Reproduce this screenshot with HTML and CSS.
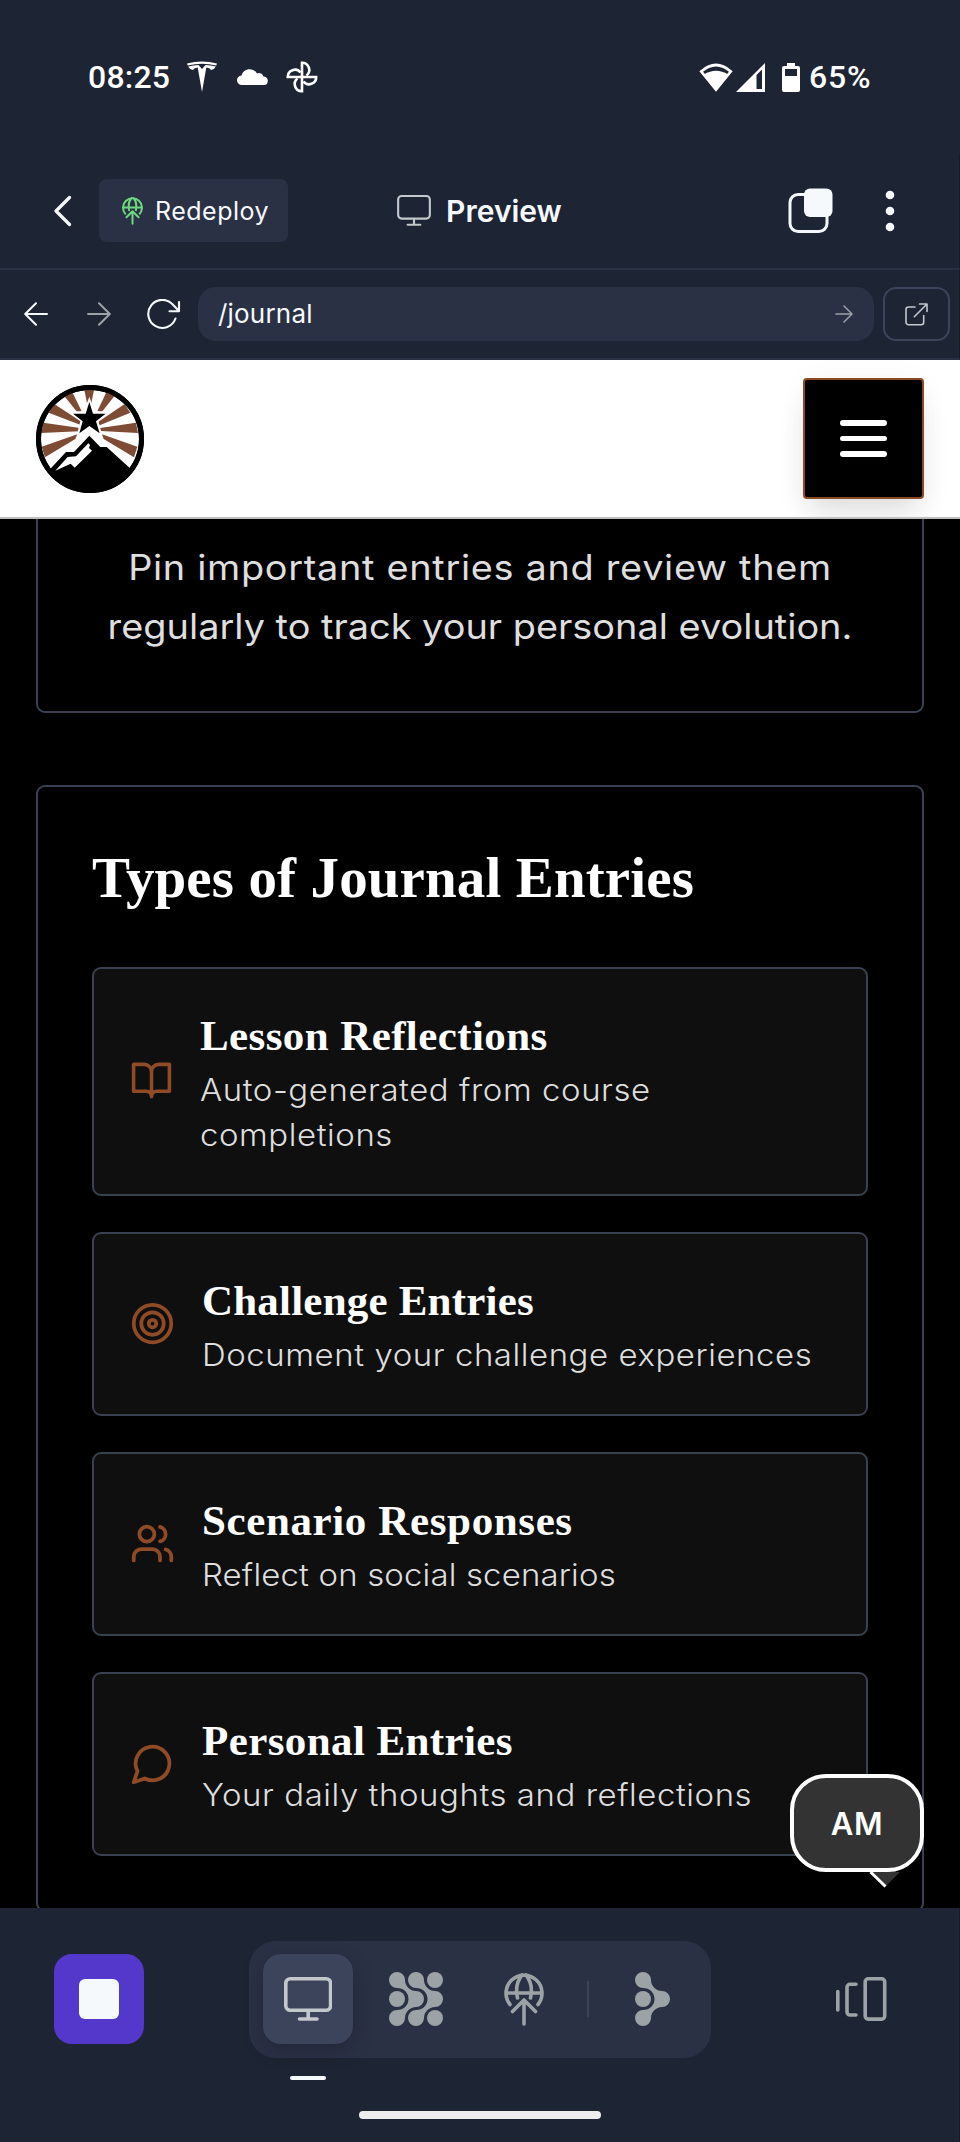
FILE: index.html
```html
<!DOCTYPE html>
<html lang="en">
<head>
<meta charset="utf-8">
<title>Preview</title>
<link rel="stylesheet" href="styles.css">
</head>
<body>
<div class="screen">
  <div class="status">
    <div class="status-left">
      <span class="clock">08:25</span>
      <svg class="ic-tesla" width="32" height="32" viewBox="0 0 32 32" fill="#fff"><path d="M1 2.600Q16-1.400 31 2.600L30.300 4.500Q16 1 1.700 4.500Z"/><path d="M2.200 5.600Q8 4 12.500 4L16 8l3.500-4Q24 4 29.800 5.600 28.500 8.600 25 9q-1.300-2.200-4.700-2.400L16 31 11.700 6.600Q8.300 6.800 7 9 3.500 8.600 2.200 5.600Z"/></svg>
      <svg class="ic-cloud" width="32" height="20" viewBox="0 0 32 20" fill="#fff"><path d="M5 18A4.500 4.500 0 0 1 4.500 8.500 8.500 8.500 0 0 1 20 6.400 5.500 5.500 0 0 1 26.500 9.500 4.400 4.400 0 0 1 28 18Z"/></svg>
      <svg class="ic-fan" width="32" height="32" viewBox="0 0 32 32" fill="none" stroke="#fff" stroke-width="2.600"><path d="M16 16V1.800A7.100 7.100 0 0 1 20.500 14.500"/><path d="M16 16H30.200A7.100 7.100 0 0 1 17.500 20.500"/><path d="M16 16V30.200A7.100 7.100 0 0 1 11.500 17.500"/><path d="M16 16H1.800A7.100 7.100 0 0 1 14.500 11.500"/></svg>
    </div>
    <div class="status-right">
      <svg width="34" height="29" viewBox="0 0 34 29"><path d="M2.200 8.500Q17-4.500 31.800 8.500L17 26.500Z" fill="none" stroke="#fff" stroke-width="2.700"/><path d="M5 11.500Q17 4 29 11.500L17 28Z" fill="#fff"/></svg>
      <svg class="ic-signal" width="29" height="29" viewBox="0 0 29 29" fill="#fff"><path fill-rule="evenodd" d="M0 29 29 0V29ZM20.500 12V26H26V6.500Z"/></svg>
      <svg class="ic-batt" width="18" height="29" viewBox="0 0 18 29"><path d="M5 0h8v3h3a2 2 0 0 1 2 2v22a2 2 0 0 1-2 2H2a2 2 0 0 1-2-2V5a2 2 0 0 1 2-2h3Z" fill="#fff"/><path d="M3 6h12v7H3z" fill="#1d2433"/></svg>
      <span class="percent">65%</span>
    </div>
  </div>

  <div class="toolbar">
    <svg class="chevron" width="18" height="32" viewBox="0 0 18 32" fill="none" stroke="#f5f9fc" stroke-width="3.200" stroke-linecap="round" stroke-linejoin="round"><path d="M15.500 2.500 2 16l13.500 13.500"/></svg>
    <div class="redeploy">
      <svg width="21" height="28" viewBox="0 0 40 53" fill="none" stroke="#6cd97e" stroke-width="3.800" stroke-linecap="round" stroke-linejoin="round"><path d="M6 31.500A18 18 0 1 1 34 31.500M2 20H38M13.500 25Q10.500 11 18 2M26.500 25Q29.500 11 22 2M20 51V27M8.500 38.500 20 27l11.500 11.500"/></svg>
      <span>Redeploy</span>
    </div>
    <div class="title">
      <svg width="34" height="31" viewBox="0 0 48 44" fill="none" stroke="#c2c8cc" stroke-width="3" stroke-linecap="round"><rect x="1.500" y="1.500" width="45" height="32" rx="5"/><path d="M24 34v8M15 42.300h18"/></svg>
      <span>Preview</span>
    </div>
    <svg class="tabs" width="46" height="46" viewBox="0 0 46 46"><rect x="2" y="6.500" width="37" height="37" rx="8" fill="none" stroke="#f5f9fc" stroke-width="3"/><rect x="16" y="0.500" width="28.500" height="28.500" rx="6" fill="#f5f9fc"/></svg>
    <svg class="dots" width="10" height="42" viewBox="0 0 10 42" fill="#f5f9fc"><circle cx="5" cy="5" r="4.300"/><circle cx="5" cy="21" r="4.300"/><circle cx="5" cy="37" r="4.300"/></svg>
  </div>

  <div class="urlbar">
    <svg class="nav-back" width="24" height="24" viewBox="0 0 24 24" fill="none" stroke="#f5f9fc" stroke-width="2" stroke-linecap="round" stroke-linejoin="round"><path d="M23 12H1.500M12 1.200 1.200 12 12 22.800"/></svg>
    <svg class="nav-fwd" width="24" height="24" viewBox="0 0 24 24" fill="none" stroke="#9da2a6" stroke-width="2" stroke-linecap="round" stroke-linejoin="round"><path d="M1 12h21.500M12 1.200 22.800 12 12 22.800"/></svg>
    <svg class="reload" width="34" height="30" viewBox="0 0 34 30" fill="none" stroke="#f5f9fc" stroke-width="2.100" stroke-linecap="round" stroke-linejoin="round"><path d="M28.500 19.500A14 14 0 1 1 25.500 5.300L32 12M32 3v9.200H22.500"/></svg>
    <div class="address">
      <span>/journal</span>
      <svg width="18" height="18" viewBox="0 0 18 18" fill="none" stroke="#9da2a6" stroke-width="1.500" stroke-linecap="round" stroke-linejoin="round"><path d="M1 9h16M9 1l8 8-8 8"/></svg>
    </div>
    <div class="external">
      <svg width="23" height="23" viewBox="0 0 23 23" fill="none" stroke="#c2c8cc" stroke-width="1.600" stroke-linecap="round" stroke-linejoin="round"><path d="M10 4H3.500A2.500 2.500 0 0 0 1 6.500v12.700a2.500 2.500 0 0 0 2.500 2.500h12.700a2.500 2.500 0 0 0 2.500-2.500V12.500M14.500 1H22V8.500M22 1 9.300 13.700"/></svg>
    </div>
  </div>

  <div class="site-header">
    <svg width="108" height="108" viewBox="108 105 324 324">
      <defs><clipPath id="disc"><circle cx="270" cy="267" r="150"/></clipPath></defs>
      <circle cx="270" cy="267" r="162" fill="#000"/>
      <circle cx="270" cy="267" r="147" fill="#fff"/>
      <g clip-path="url(#disc)">
        <g fill="#7e4c35">
          <path d="M253 119H282L273 165H262Z"/>
          <path d="M192 137 217 127 245 184 232 187Z"/><path d="M344 137 319 127 292 184 305 187Z"/>
          <path d="M146 188 163 162 245 216 240 224Z"/><path d="M391 188 374 162 294 216 299 226Z"/>
          <path d="M123 249 130 218 240 234 238 244Z"/><path d="M414 249 408 218 300 234 302 243Z"/>
          <path d="M125 290 135 322 226 267 232 253Z"/><path d="M412 290 402 322 311 267 306 253Z"/>
        </g>
        <path d="M268 140 284 184H324L295 213 306 257 268 232 230 257 241 213 212 184H252Z" fill="#fff"/>
        <path d="M268 156 279 191H317L288 214 299 250 268 228 238 250 248 214 219 191H257Z"/>
        <path d="M144 358 200 298 268 231 300 258 394 358 300 400H200Z" fill="#fff"/>
        <path d="M120 390 198 306H222L268 257 301 291H320L400 364V430H120Z"/>
        <path d="M166 362 203 321 228 319 265 280 270 285 267 294 276 302 224 353 212 341Z" fill="#fff"/>
      </g>
      <circle cx="270" cy="267" r="154.500" fill="none" stroke="#000" stroke-width="15"/>
    </svg>
    <div class="menu"><i></i><i></i><i></i></div>
  </div>

  <div class="page">
    <div class="card intro">
      <p class="spaced">Pin important entries and review them</p>
      <p>regularly to track your personal evolution.</p>
    </div>
    <div class="card types">
      <h2>Types of Journal Entries</h2>
      <div class="entry">
        <svg class="icon narrow" viewBox="0 0 24 24"><path d="M2 3h6a4 4 0 0 1 4 4v14a3 3 0 0 0-3-3H2zM22 3h-6a4 4 0 0 0-4 4v14a3 3 0 0 1 3-3h7z"/></svg>
        <div><h3>Lesson Reflections</h3><p>Auto-generated from course<br>completions</p></div>
      </div>
      <div class="entry">
        <svg class="icon" viewBox="0 0 24 24"><circle cx="12" cy="12" r="10"/><circle cx="12" cy="12" r="6"/><circle cx="12" cy="12" r="2"/></svg>
        <div><h3 class="snug">Challenge Entries</h3><p>Document your challenge experiences</p></div>
      </div>
      <div class="entry">
        <svg class="icon" viewBox="0 0 24 24"><path d="M16 21v-2a4 4 0 0 0-4-4H6a4 4 0 0 0-4 4v2"/><circle cx="9" cy="7" r="4"/><path d="M22 21v-2a4 4 0 0 0-3-3.870M16 3.130a4 4 0 0 1 0 7.750"/></svg>
        <div><h3 class="wide">Scenario Responses</h3><p class="snug">Reflect on social scenarios</p></div>
      </div>
      <div class="entry">
        <svg class="icon" viewBox="0 0 24 24"><path d="M7.900 20A9 9 0 1 0 4 16.100L2 22Z"/></svg>
        <div><h3>Personal Entries</h3><p>Your daily thoughts and reflections</p></div>
      </div>
    </div>
    <div class="bubble">AM
      <svg class="tail" width="34" height="16" viewBox="0 0 34 16"><path d="M4 0 18 14 32 0Z" fill="#333"/><path d="M2.500 0 17.500 14.500" stroke="#fff" stroke-width="3"/></svg>
    </div>
  </div>

  <div class="dock">
    <div class="dock-row">
      <div class="stop"><i></i></div>
      <div class="pill">
        <div class="slot active">
          <svg width="48" height="44" viewBox="0 0 48 44" fill="none" stroke="#c2c8cc" stroke-width="3.600" stroke-linecap="round"><rect x="1.800" y="1.800" width="44.800" height="31.400" rx="4.500"/><path d="M24.200 34v8M15.500 42h17.500"/></svg>
        </div>
        <div class="slot">
          <svg width="54" height="54" viewBox="0 0 54 54" fill="#9da2a6"><defs><path id="fork" d="M16 8C16 14 21 19 27 19A8 8 0 0 1 27 35C21 35 16 40 16 46A8 8 0 1 1 8 38C14.500 38 19.500 33.500 19.500 27 19.500 20.500 14.500 16 8 16A8 8 0 1 1 16 8Z"/></defs><use href="#fork"/><use href="#fork" x="19"/><circle cx="8" cy="27" r="8"/><circle cx="46" cy="8" r="8"/><circle cx="46" cy="46" r="8"/></svg>
        </div>
        <div class="slot">
          <svg width="40" height="53" viewBox="0 0 40 53" fill="none" stroke="#9da2a6" stroke-width="3.600" stroke-linecap="round" stroke-linejoin="round"><path d="M6 31.500A18 18 0 1 1 34 31.500M2 20H38M13.500 25Q10.500 11 18 2M26.500 25Q29.500 11 22 2M20 51V27M8.500 38.500 20 27l11.500 11.500"/></svg>
        </div>
        <span class="divider"></span>
        <div class="slot">
          <svg width="35" height="54" viewBox="0 0 35 54" fill="#9da2a6"><use href="#fork"/><circle cx="8" cy="27" r="8"/></svg>
        </div>
      </div>
      <svg class="panes" width="51" height="44" viewBox="0 0 51 44" fill="none" stroke="#9da2a6" stroke-width="3.600" stroke-linecap="round" stroke-linejoin="round"><rect x="29.200" y="1.800" width="19.500" height="40.300" rx="3"/><path d="M20 7.300H14a3 3 0 0 0-3 3V35a3 3 0 0 0 3 3h6M1.800 14.500V33"/></svg>
    </div>
    <div class="marker"></div>
    <div class="home"></div>
  </div>
</div>
</body>
</html>
```
FILE: styles.css
```css
* { box-sizing: border-box; }
body { margin: 0; background: #000; font-family: Inter, "Liberation Sans", sans-serif; }
svg { display: block; flex: none; }
h2, h3, p { margin: 0; font-weight: 400; }

.screen { width: 960px; height: 2142px; display: flex; flex-direction: column; overflow: hidden; background: #1d2433; }

.status { height: 154px; padding: 0 89px 0 88px; display: flex; justify-content: space-between; color: #fff; }
.status-left, .status-right { display: flex; align-items: center; height: 154px; }
.clock { font-family: Roboto, sans-serif; font-weight: 500; font-size: 32px; width: 98px; letter-spacing: 0.2px; }
.ic-cloud { margin-left: 19px; }
.ic-fan { margin-left: 17px; }
.ic-signal { margin-left: 3px; }
.ic-batt { margin-left: 17px; }
.percent { font-family: Roboto, sans-serif; font-weight: 500; font-size: 32px; letter-spacing: 0.8px; margin-left: 9px; width: 62px; white-space: nowrap; }

.toolbar { height: 114px; padding: 0 64px 1px 54px; display: flex; align-items: center; border-right: 1px solid #161b28; color: #f5f9fc; }
.chevron { margin-top: 1px; }
.redeploy { margin-left: 27px; width: 190px; height: 63px; padding-left: 23px; border-radius: 8px; background: #2b3145; display: flex; align-items: center; gap: 12px; font-size: 25px; letter-spacing: 0.5px; }
.title { margin-left: 109px; display: flex; align-items: center; gap: 15px; font-size: 30px; font-weight: 600; width: 200px; }
.tabs { margin-left: 192px; }
.dots { margin-left: 51px; }

.urlbar { height: 92px; padding: 0 9px 0 24px; border-top: 2px solid #2b3145; border-bottom: 2px solid #2b3145; border-right: 1px solid #161b28; display: flex; align-items: center; }
.nav-fwd { margin-left: 39px; }
.reload { margin-left: 36px; }
.address { margin-left: 17px; width: 676px; height: 54px; padding: 0 21px 1px 20px; border-radius: 18px; background: #2b3145; color: #f5f9fc; font-size: 26px; letter-spacing: 0.2px; display: flex; align-items: center; justify-content: space-between; }
.external { margin-left: 9px; width: 67px; height: 54px; border: 2px solid #3c445c; border-radius: 13px; display: flex; align-items: center; justify-content: center; }

.site-header { height: 159px; padding: 0 36px; background: #fff; border-bottom: 2px solid #bfbfbf; display: flex; align-items: center; justify-content: space-between; }
.menu { width: 121px; height: 121px; border: 2px solid #8b4a26; border-radius: 4px; background: #000; display: flex; flex-direction: column; align-items: center; justify-content: center; gap: 10px; box-shadow: 0 20px 30px -6px rgba(0,0,0,.12), 0 0 30px rgba(0,0,0,.03); clip-path: inset(-18px -36px -18px -36px); }
.menu i { width: 47px; height: 5.700px; border-radius: 3px; background: #fff; }

.page { position: relative; height: 1389px; padding: 0 36px; background: #000; overflow: hidden; }
.card { border: 2px solid #374151; border-radius: 9px; }
.intro { height: 194px; padding-top: 19px; border-top: 0; border-radius: 0 0 9px 9px; text-align: center; color: #dedede; font-size: 35px; font-weight: 300; line-height: 58.500px; white-space: nowrap; }
.intro p { transform: scaleX(1.083); }
.intro .spaced { letter-spacing: 0.620px; }
.types { margin-top: 72px; padding: 54px; display: flex; flex-direction: column; gap: 36px; }
.types h2 { height: 72px; margin-bottom: 18px; font: bold 57px/74px "Liberation Serif", serif; letter-spacing: 0.120px; color: #fff; white-space: nowrap; }
.entry { border: 2px solid #374151; border-radius: 9px; background: #0f0f0f; padding: 35px 36px 37px; display: flex; align-items: center; gap: 27px; white-space: nowrap; }
.icon { width: 45px; height: 45px; fill: none; stroke: #8f4a26; stroke-width: 2; stroke-linecap: round; stroke-linejoin: round; }
.narrow { width: 43px; }
.entry h3 { font: bold 43px/64px "Liberation Serif", serif; height: 63px; letter-spacing: 0.400px; color: #fff; }
.entry h3.snug { letter-spacing: 0.200px; }
.entry h3.wide { letter-spacing: 0.620px; }
.entry p { color: #dedede; font-size: 30.500px; font-weight: 300; line-height: 45px; letter-spacing: 0.520px; transform: scaleX(1.08); transform-origin: left; }
.entry p.snug { letter-spacing: 0.150px; }

.bubble { position: absolute; left: 790px; top: 1255px; width: 134px; height: 98px; border: 4px solid #fff; border-radius: 36px; background: #333; color: #fff; font-size: 31px; font-weight: 600; letter-spacing: 0.800px; line-height: 91px; text-align: center; }
.tail { position: absolute; left: 74px; top: 94px; }

.dock { height: 234px; padding-top: 33px; border-right: 1px solid #161b28; }
.dock-row { display: flex; align-items: center; height: 117px; padding-left: 54px; }
.stop { width: 90px; height: 90px; margin-bottom: 1px; border-radius: 18px; background: #5338cb; display: flex; align-items: center; justify-content: center; }
.stop i { width: 40px; height: 40px; border-radius: 6px; background: #f5f9fc; }
.pill { margin-left: 105px; width: 462px; height: 117px; border-radius: 27px; background: #2b3145; padding: 0 14px 1px; display: flex; align-items: center; gap: 18px; }
.slot { width: 90px; height: 90px; display: flex; align-items: center; justify-content: center; border-radius: 18px; }
.active { background: #3c445c; box-shadow: 0 6px 18px rgba(20,24,38,.35); }
.divider { width: 2px; height: 36px; background: #3c445c; }
.panes { margin: 0 0 1px 125px; }
.marker { margin: 18px 0 0 290px; width: 36px; height: 4px; border-radius: 2px; background: #f5f9fc; }
.home { margin: 31px 0 0 359px; width: 242px; height: 8px; border-radius: 4px; background: #ededf0; }
```
